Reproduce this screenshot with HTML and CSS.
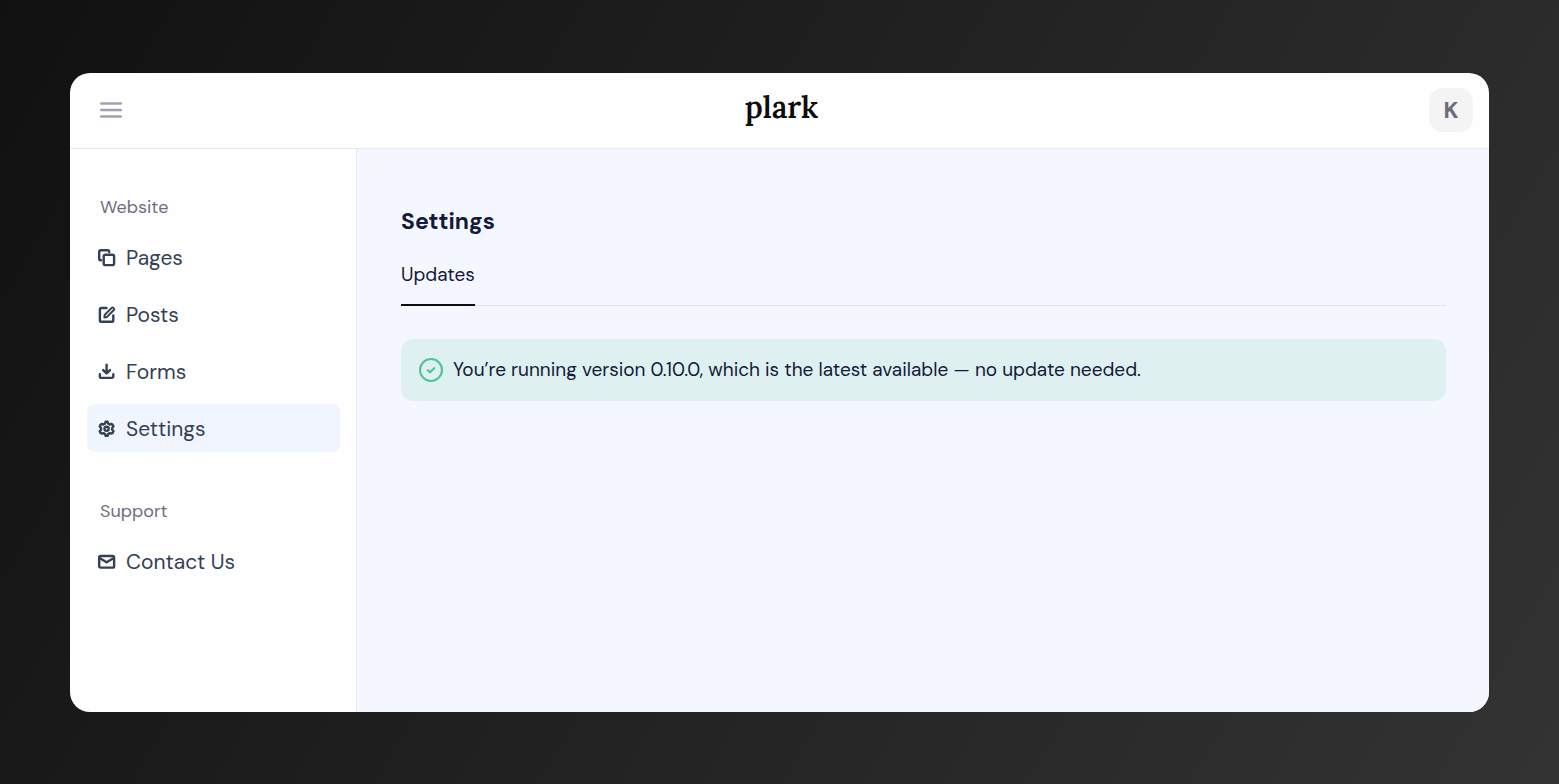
FILE: index.html
```html
<!DOCTYPE html>
<html lang="en">
<head>
<meta charset="utf-8">
<meta name="viewport" content="width=device-width, initial-scale=1">
<title>Settings – plark</title>
<link rel="stylesheet" href="styles.css">
</head>
<body>
<div class="window">
  <header class="topbar">
    <button class="menu-button" type="button" aria-label="Toggle menu">
      <svg width="22" height="16" viewBox="0 0 22 16" fill="none" stroke="currentColor" stroke-width="2.4" stroke-linecap="round"><path d="M1.200 1.500h19.600M1.200 8h19.600M1.200 14.500h19.600"/></svg>
    </button>
    <a class="logo" href="#">plark</a>
    <button class="avatar" type="button">K</button>
  </header>
  <div class="body">
    <nav class="sidebar">
      <section class="group">
        <h2 class="group-title">Website</h2>
        <ul class="nav-list">
          <li><a class="nav-link" href="#">
            <svg class="icon" viewBox="0 0 18 18"><rect x="5.700" y="5.700" width="10.400" height="10.400" rx="1.600"/><path d="M3 11.200H2.700A1.500 1.500 0 0 1 1.200 9.700V2.700A1.500 1.500 0 0 1 2.700 1.200H9.700A1.500 1.500 0 0 1 11.200 2.700V3"/></svg>
            Pages</a></li>
          <li><a class="nav-link" href="#">
            <svg class="icon" viewBox="0 0 18 18"><path d="M8.500 2H3.200A1.300 1.300 0 0 0 1.900 3.300V14.500A1.300 1.300 0 0 0 3.200 15.800H14A1.300 1.300 0 0 0 15.300 14.500V9.500"/><path class="thin" d="M6.300 11.400L6.800 8.700L13.400 2.100A1.550 1.550 0 0 1 15.600 4.300L9 10.900Z"/></svg>
            Posts</a></li>
          <li><a class="nav-link" href="#">
            <svg class="icon" viewBox="0 0 18 18"><path d="M8.600 1.800V10.200M5.200 7.100L8.600 10.500L12 7.100M1.900 11.200V13.400A1.500 1.500 0 0 0 3.400 14.900H13.800A1.500 1.500 0 0 0 15.300 13.400V11.200"/></svg>
            Forms</a></li>
          <li><a class="nav-link active" href="#" aria-current="page">
            <svg class="icon" viewBox="0 0 18 18"><path d="M7.100 3.500L7.600 1.700H9.600L10.100 3.500L11.800 4.500L13.600 4L14.700 4.700L15.500 6.500L14.200 7.800V9.800L15.500 11.100L14.700 12.900L13.600 13.600L11.800 13.100L10.100 14.100L9.600 15.900H7.600L7.100 14.100L5.400 13.100L3.600 13.600L2.500 12.900L1.700 11.100L3 9.800V7.800L1.700 6.500L2.500 4.700L3.600 4L5.400 4.500Z"/><circle cx="8.600" cy="8.800" r="2.100"/></svg>
            Settings</a></li>
        </ul>
      </section>
      <section class="group">
        <h2 class="group-title">Support</h2>
        <ul class="nav-list">
          <li><a class="nav-link" href="#">
            <svg class="icon" viewBox="0 0 18 18"><rect x="1.200" y="3" width="14.900" height="11.600" rx="1.400"/><path d="M1.900 5.200L8.650 9.200L15.400 5.200"/></svg>
            Contact Us</a></li>
        </ul>
      </section>
    </nav>
    <main class="content">
      <h1 class="title">Settings</h1>
      <div class="tabs" role="tablist">
        <button class="tab" type="button" role="tab" aria-selected="true">Updates</button>
      </div>
      <div class="notice" role="status">
        <svg class="notice-icon" viewBox="0 0 24 24"><circle cx="12" cy="12" r="11"/><path d="M8.800 12.200L11 14.300L15.200 10.200"/></svg>
        <p class="notice-text">You’re running version 0.10.0, which is the latest available — no update needed.</p>
      </div>
    </main>
  </div>
</div>
</body>
</html>
```
FILE: styles.css
```css
*, *::before, *::after { box-sizing: border-box; }

body {
  margin: 0;
  min-height: 100vh;
  padding: 73px 70px 72px;
  display: flex;
  background: linear-gradient(120deg, #111111, #333333);
  font-family: "DM Sans", Lato, "Open Sans", sans-serif;
  color: #15193b;
}

button { border: 0; padding: 0; background: none; font: inherit; color: inherit; cursor: pointer; }
a { color: inherit; text-decoration: none; }
h1, h2, p, ul { margin: 0; padding: 0; }
ul { list-style: none; }

.window {
  flex: 1;
  display: flex;
  flex-direction: column;
  overflow: hidden;
  border-radius: 20px;
  background: #fefefe;
}

.topbar {
  display: grid;
  grid-template-columns: 1fr auto 1fr;
  align-items: center;
  padding: 15px 16px 16px 30px;
  border-bottom: 1px solid #e8eaee;
}

.menu-button { justify-self: start; display: flex; color: #a0a1ae; }

.logo {
  padding: 0 10px 6px 0;
  font: 600 30px/36px Lora, "Liberation Serif", serif;
  color: #0c0c0c;
}

.avatar {
  justify-self: end;
  width: 44px;
  height: 44px;
  border-radius: 14px;
  background: #f4f4f5;
  font-weight: 700;
  font-size: 23px;
  line-height: 44px;
  color: #6b6b7b;
}

.body { flex: 1; display: flex; }

.sidebar {
  flex: none;
  width: 287px;
  padding: 45px 16px 45px 17px;
  display: flex;
  flex-direction: column;
  gap: 46px;
  border-right: 1px solid #e8eaee;
}

.group-title {
  margin-bottom: 13px;
  padding-left: 13px;
  font-size: 18px;
  line-height: 26px;
  font-weight: 400;
  color: #6d6f80;
}

.nav-list { display: grid; gap: 9px; }

.nav-link {
  display: flex;
  align-items: center;
  gap: 10px;
  height: 48px;
  padding: 2px 11px 0;
  border-radius: 8px;
  font-size: 21px;
  color: #344054;
}

.nav-link.active { background: #f0f5ff; }

.icon {
  flex: none;
  width: 18px;
  height: 18px;
  fill: none;
  stroke: currentColor;
  stroke-width: 2.4;
  stroke-linecap: round;
  stroke-linejoin: round;
}

.icon .thin { stroke-width: 2; }

.content { flex: 1; padding: 56px 43px 44px 44px; background: #f4f7ff; }

.title { font-size: 23px; line-height: 32px; font-weight: 700; }

.tabs { display: flex; margin-top: 20px; box-shadow: inset 0 -1px #e3e4eb; }

.tab {
  padding: 5px 0 16px;
  border-bottom: 2px solid #0c0c0c;
  font-size: 19px;
  line-height: 26px;
}

.notice {
  display: flex;
  align-items: center;
  gap: 10px;
  margin-top: 33px;
  padding: 18px;
  border-radius: 12px;
  background: #def1f0;
}

.notice-icon {
  flex: none;
  width: 24px;
  height: 24px;
  fill: none;
  stroke: #50c49b;
  stroke-width: 2.2;
  stroke-linecap: round;
  stroke-linejoin: round;
}

.notice-text { font-size: 19px; line-height: 26px; }
```
